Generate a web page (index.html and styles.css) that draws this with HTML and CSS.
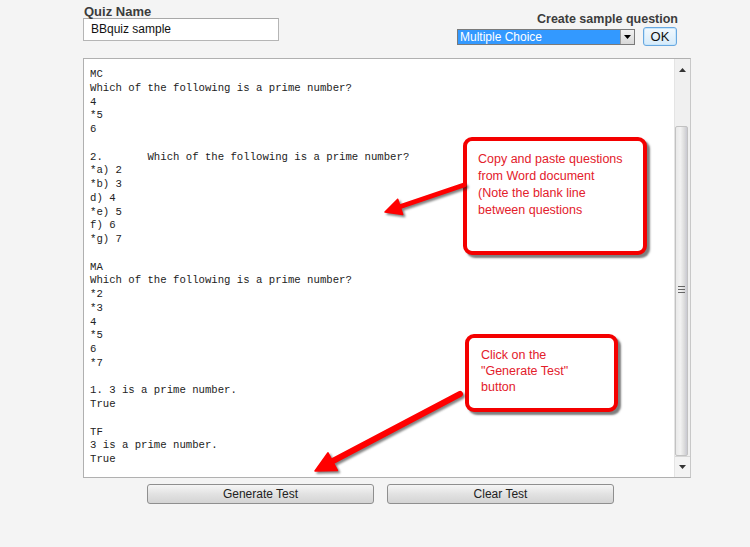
FILE: index.html
```html
<!DOCTYPE html>
<html>
<head>
<meta charset="utf-8">
<link rel="stylesheet" href="styles.css">
</head>
<body>
<div class="page">
  <div class="top">
    <div class="field">
      <div class="label">Quiz Name</div>
      <div class="input">BBquiz sample</div>
    </div>
    <div class="sample">
      <div class="label">Create sample question</div>
      <div class="sample-row">
        <div class="select"><span class="sel-text">Multiple Choice</span><span class="sel-btn"><svg width="7" height="4" viewBox="0 0 7 4"><path d="M0 0H7L3.5 4Z" fill="#000"/></svg></span></div>
        <div class="ok">OK</div>
      </div>
    </div>
  </div>
  <div class="editor">
    <div class="text">MC
Which of the following is a prime number?
4
*5
6

2.       Which of the following is a prime number?
*a) 2
*b) 3
d) 4
*e) 5
f) 6
*g) 7

MA
Which of the following is a prime number?
*2
*3
4
*5
6
*7

1. 3 is a prime number.
True

TF
3 is a prime number.
True</div>
    <div class="scrollbar">
      <div class="sb-arrow"><svg width="7" height="4" viewBox="0 0 7 4"><path d="M0 4H7L3.5 0Z" fill="#333"/></svg></div>
      <div class="sb-track">
        <div class="sb-thumb"><div class="grip"></div></div>
      </div>
      <div class="sb-arrow down"><svg width="7" height="4" viewBox="0 0 7 4"><path d="M0 0H7L3.5 4Z" fill="#333"/></svg></div>
    </div>
  </div>
  <div class="buttons">
    <div class="btn">Generate Test</div>
    <div class="btn">Clear Test</div>
  </div>
</div>

<div class="callout c1">Copy and paste questions<br>from Word document<br>(Note the blank line<br>between questions</div>
<div class="callout c2">Click on the<br>"Generate Test"<br>button</div>

<svg class="arrows" width="750" height="547" viewBox="0 0 750 547">
  <g fill="#f00" stroke="#f00" class="arr">
    <line x1="464" y1="185" x2="399" y2="207" stroke-width="5" stroke-linecap="round"/>
    <polygon points="385,212 402.7,214.5 397.7,199.3" stroke-width="1.5" stroke-linejoin="round"/>
    <line x1="460" y1="394" x2="331" y2="462" stroke-width="6" stroke-linecap="round"/>
    <polygon points="315,471 337.4,470.4 328,452.8" stroke-width="1.5" stroke-linejoin="round"/>
  </g>
</svg>
</body>
</html>
```
FILE: styles.css
```css
html, body {
  margin: 0;
  padding: 0;
  background: #f4f4f4;
}
body {
  width: 750px;
  height: 547px;
  overflow: hidden;
  position: relative;
  font-family: "Liberation Sans", Arial, sans-serif;
}
.page {
  margin-left: 83px;
  width: 608px;
  padding-top: 5px;
}
.top {
  display: flex;
  justify-content: space-between;
  align-items: flex-start;
  height: 53px;
}
.label {
  font-weight: bold;
  font-size: 13px;
  color: #3c3c3c;
  line-height: 14px;
  padding-left: 1px;
}
.input {
  margin-top: -1px;
  width: 187px;
  height: 21px;
  border: 1px solid #b5b5b5;
  border-top-color: #a8a8a8;
  background: #fff;
  font-size: 12px;
  line-height: 21px;
  padding-left: 7px;
  color: #111;
}
.sample {
  display: flex;
  flex-direction: column;
  align-items: flex-end;
  padding-top: 7px;
  margin-right: 13px;
}
.sample .label {
  font-size: 12.5px;
}
.sample-row {
  display: flex;
  align-items: center;
  gap: 8px;
  margin-top: 1px;
  margin-right: 1px;
}
.select {
  width: 178px;
  height: 16px;
  border: 1px solid #7a7a7a;
  box-sizing: border-box;
  display: flex;
  background: #fff;
}
.sel-text {
  flex: 1;
  background: #3399ff;
  color: #fff;
  font-size: 12px;
  line-height: 14px;
  padding-left: 2px;
}
.sel-btn {
  width: 13px;
  background: linear-gradient(#f2f2f2, #d8d8d8);
  border-left: 1px solid #9a9a9a;
  display: flex;
  align-items: center;
  justify-content: center;
}
.ok {
  width: 32px;
  height: 17px;
  border: 1px solid #68a8e0;
  border-radius: 3px;
  background: linear-gradient(#f2f9fe, #d6ebfa);
  font-size: 13px;
  line-height: 17px;
  text-align: center;
  color: #111;
  box-shadow: inset 0 0 0 1px #c8e6fb;
}
.editor {
  display: flex;
  height: 420px;
  border: 1px solid #b0b0b0;
  border-right-color: #c8c8c8;
  background: #fff;
  box-sizing: border-box;
}
.text {
  flex: 1;
  white-space: pre;
  font-family: "Liberation Mono", "Courier New", monospace;
  font-size: 10.65px;
  line-height: 13.75px;
  color: #222;
  padding: 9px 0 0 6px;
}
.scrollbar {
  width: 15px;
  display: flex;
  flex-direction: column;
  background: #f0f0f0;
  border-left: 1px solid #e4e4e4;
}
.sb-arrow {
  height: 17px;
  display: flex;
  align-items: center;
  justify-content: center;
  padding-top: 2px;
}
.sb-arrow.down {
  padding-top: 0;
  height: 20px;
  border-top: 1px solid #d6d6d6;
  background: #f3f3f3;
}
.sb-track {
  flex: 1;
  display: flex;
  flex-direction: column;
  justify-content: flex-end;
}
.sb-thumb {
  height: 330px;
  width: 13px;
  border: 1px solid #c2c2c2;
  border-radius: 2px;
  background: linear-gradient(90deg, #e9e9e9, #f2f2f2 40%, #dcdcdc 75%, #c9c9d2);
  display: flex;
  align-items: center;
  justify-content: center;
  box-sizing: border-box;
}
.grip {
  width: 7px;
  height: 7px;
  margin-top: -3px;
  background: repeating-linear-gradient(#666 0 1px, transparent 1px 3px);
}
.buttons {
  display: flex;
  gap: 13px;
  padding-left: 64px;
  margin-top: 6px;
}
.btn {
  width: 225px;
  height: 18px;
  border: 1px solid #8f8f8f;
  border-radius: 3px;
  background: linear-gradient(#f6f6f6, #e2e2e2 50%, #d4d4d4);
  font-size: 12px;
  line-height: 18px;
  text-align: center;
  color: #222;
}
.callout {
  position: absolute;
  background: #fff;
  border: 4px solid #f40000;
  border-radius: 9px;
  box-shadow: 3px 3px 2px rgba(40, 40, 40, 0.6);
  color: #e3202b;
  font-family: "Liberation Sans", Arial, sans-serif;
  font-size: 12.5px;
  box-sizing: border-box;
}
.c1 {
  left: 463px;
  top: 137px;
  width: 184px;
  height: 118px;
  line-height: 17px;
  padding: 10px 0 0 11px;
}
.c2 {
  left: 465px;
  top: 334px;
  width: 153px;
  height: 78px;
  line-height: 16px;
  padding: 9px 0 0 12px;
}
.arrows {
  position: absolute;
  left: 0;
  top: 0;
  pointer-events: none;
}
.arr {
  filter: drop-shadow(2px 2px 1px rgba(30, 30, 30, 0.55));
}
```
